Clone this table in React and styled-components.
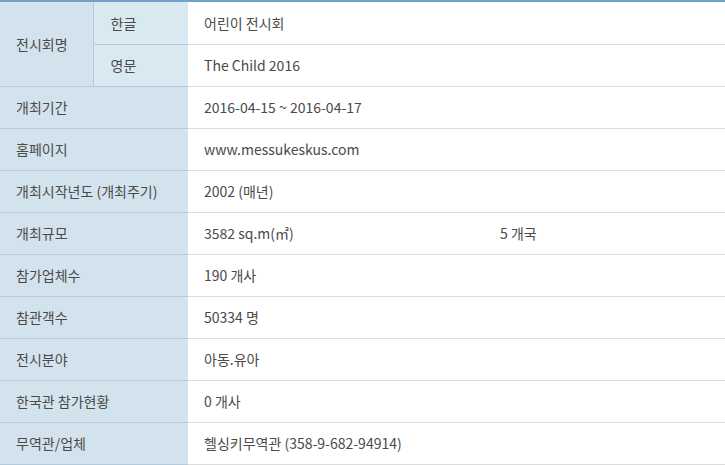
import * as React from "react";
import styled, { createGlobalStyle } from "styled-components";

const GlobalStyle = createGlobalStyle`
  html, body {
    margin: 0;
    padding: 0;
    background: #ffffff;
  }
  body {
    font-family: "Noto Sans CJK KR", "Noto Sans", sans-serif;
  }
`;

const rows = [
  { label: "개최기간", value: "2016-04-15 ~ 2016-04-17" },
  { label: "홈페이지", value: "www.messukeskus.com" },
  { label: "개최시작년도 (개최주기)", value: "2002 (매년)" },
  { label: "개최규모", value: "3582 sq.m(㎡)", extra: "5 개국" },
  { label: "참가업체수", value: "190 개사" },
  { label: "참관객수", value: "50334 명" },
  { label: "전시분야", value: "아동.유아" },
  { label: "한국관 참가현황", value: "0 개사" },
  { label: "무역관/업체", value: "헬싱키무역관 (358-9-682-94914)" },
];

const App = () => {
  return (
    <>
      <GlobalStyle />
      <Table>
        <colgroup>
          <col style={{ width: 93 }} />
          <col style={{ width: 95 }} />
          <col style={{ width: 296 }} />
          <col />
        </colgroup>
        <tbody>
          <Row $first>
            <Head rowSpan={2} $divider>
              전시회명
            </Head>
            <SubHead>한글</SubHead>
            <Cell colSpan={2}>어린이 전시회</Cell>
          </Row>
          <Row>
            <SubHead>영문</SubHead>
            <Cell colSpan={2}>The Child 2016</Cell>
          </Row>
          {rows.map((row) => (
            <Row key={row.label}>
              <Head colSpan={2}>{row.label}</Head>
              {row.extra ? (
                <>
                  <Cell>{row.value}</Cell>
                  <Cell>{row.extra}</Cell>
                </>
              ) : (
                <Cell colSpan={2}>{row.value}</Cell>
              )}
            </Row>
          ))}
        </tbody>
      </Table>
    </>
  );
};

const Table = styled.table`
  width: 725px;
  border-collapse: collapse;
  table-layout: fixed;
  border-top: 2px solid #6fa2c6;
  font-size: 14px;
  color: #4a4a4a;
`;

const Row = styled.tr`
  height: ${(p) => (p.$first ? "43px" : "42px")};
`;

const Head = styled.th`
  background: #d3e3ed;
  border-bottom: 1px solid #b5cbdb;
  border-right: ${(p) => (p.$divider ? "1px solid #b5cbdb" : "none")};
  text-align: left;
  font-weight: normal;
  padding: 0 0 0 16px;
  white-space: nowrap;
`;

const SubHead = styled.th`
  background: #d9e9f2;
  border-bottom: 1px solid #b5cbdb;
  text-align: left;
  font-weight: normal;
  padding: 0 0 0 17px;
`;

const Cell = styled.td`
  border-bottom: 1px solid #dcdcdc;
  padding: 0 0 0 16px;
  white-space: nowrap;
`;

export default App;
